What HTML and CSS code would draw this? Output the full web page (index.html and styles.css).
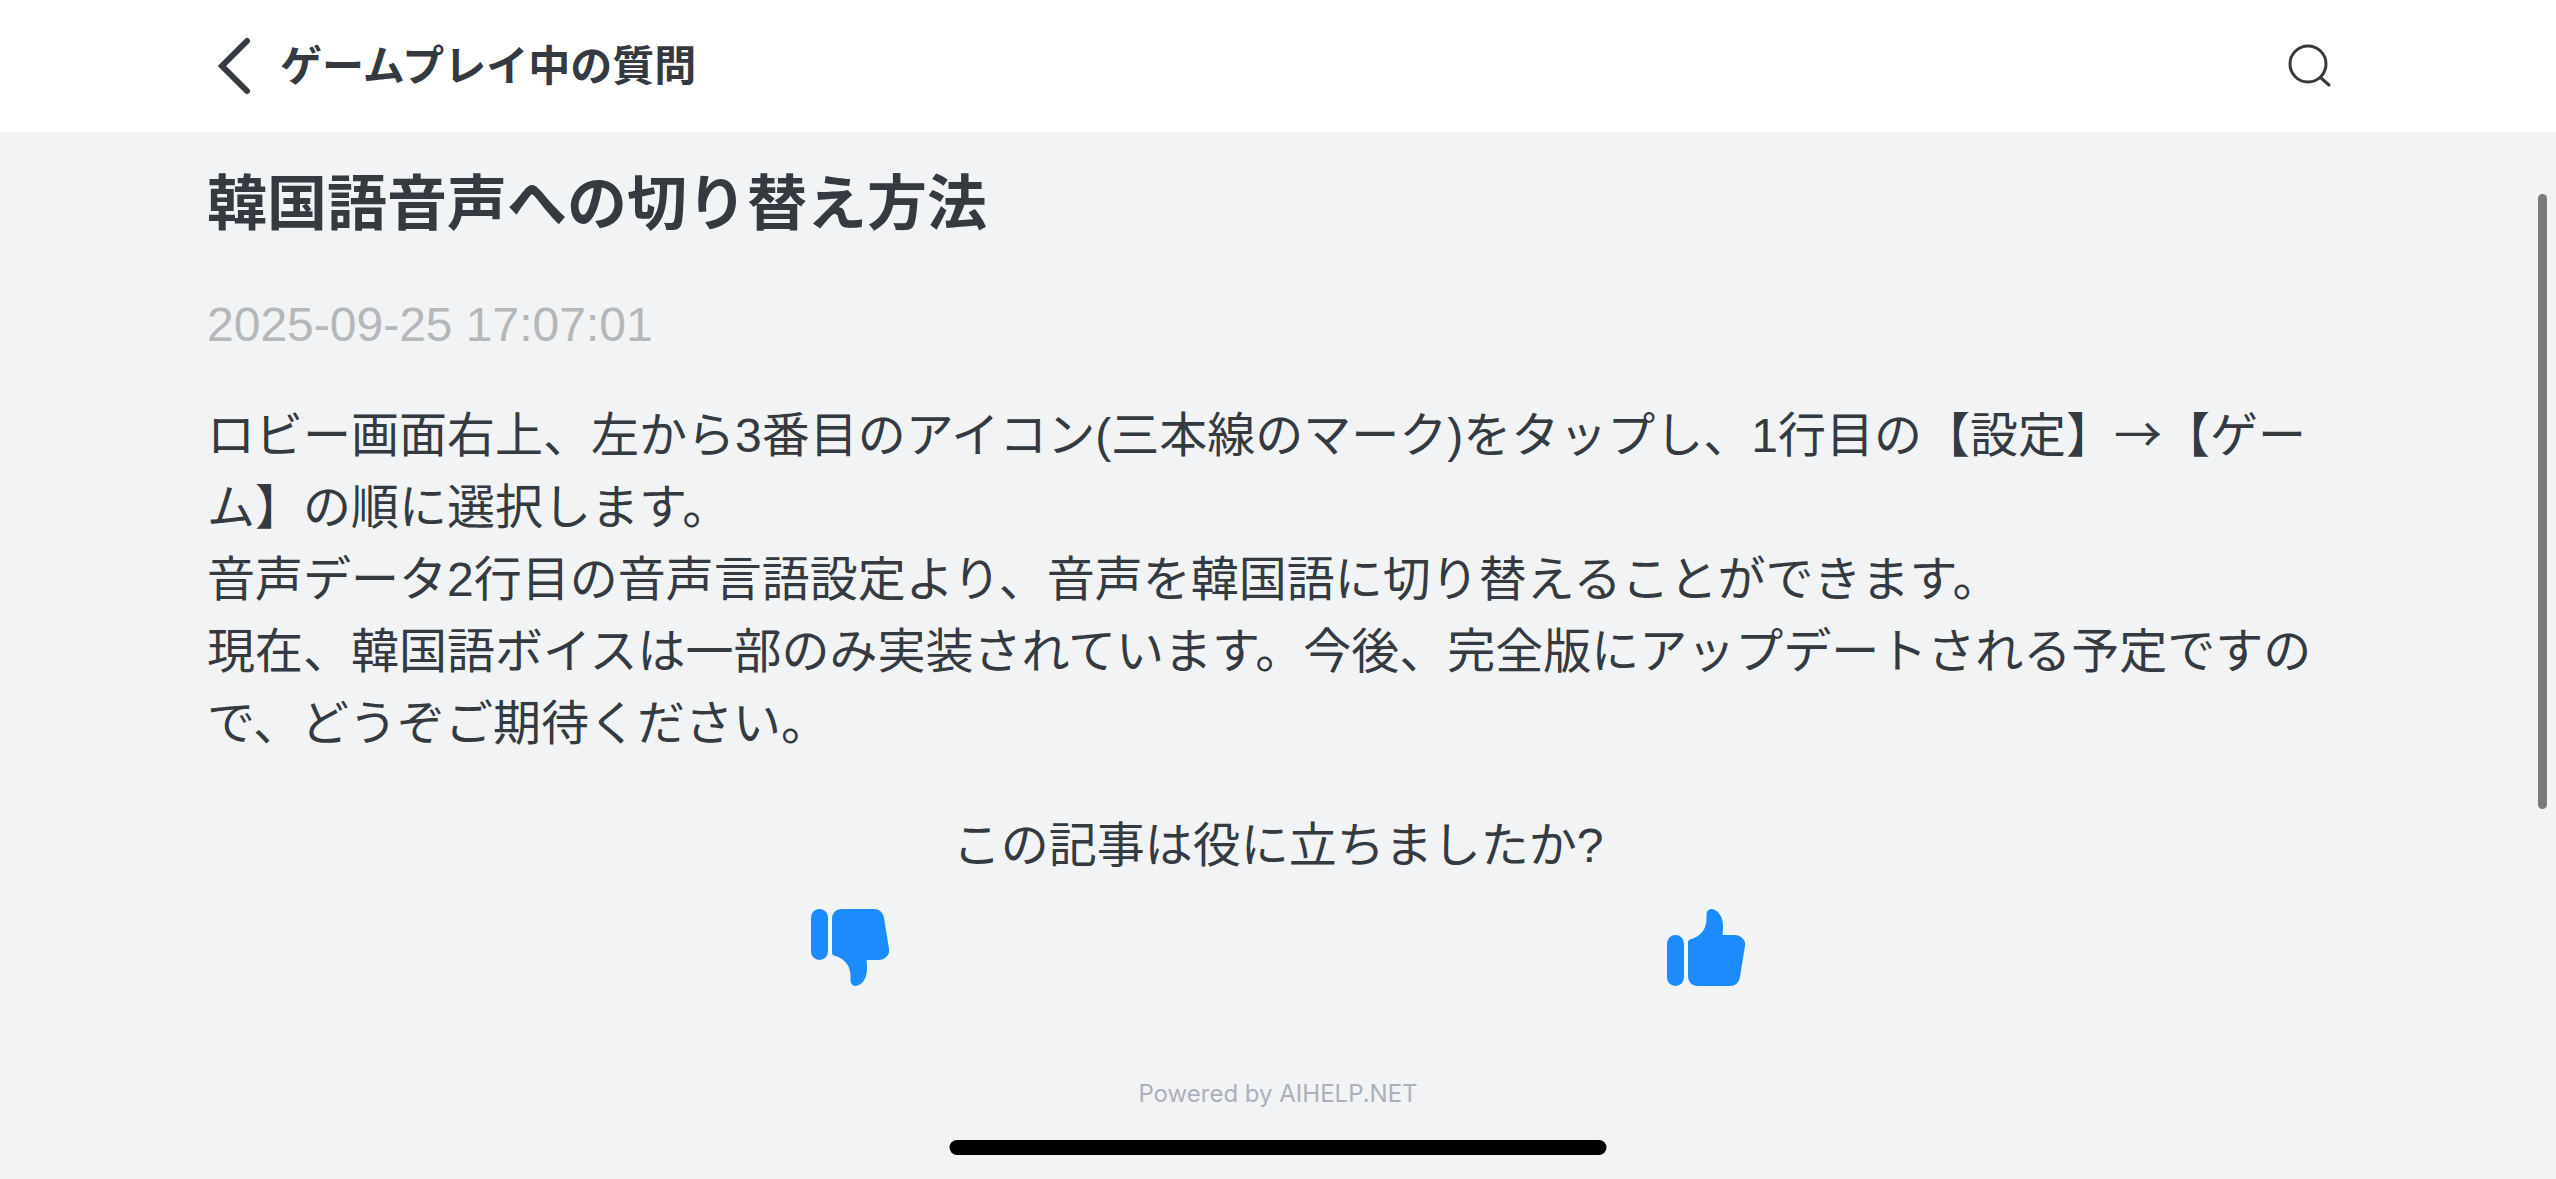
FILE: index.html
```html
<!DOCTYPE html>
<html lang="ja">
<head>
	<meta charset="utf-8">
	<meta name="viewport" content="width=device-width, initial-scale=1">
	<title>ゲームプレイ中の質問</title>
	<link rel="stylesheet" href="styles.css">
</head>
<body>
	<header class="header">
		<button class="back-button" type="button" aria-label="戻る">
			<svg width="36" height="60" viewBox="0 0 36 60" fill="none" stroke="currentColor" stroke-width="6" stroke-linecap="round" stroke-linejoin="miter">
				<path d="M31 5L6 30L31 55"/>
			</svg>
		</button>
		<h1 class="header-title">ゲームプレイ中の質問</h1>
		<button class="search-button" type="button" aria-label="検索">
			<svg width="48" height="48" viewBox="0 0 48 48" fill="none" stroke="currentColor" stroke-width="3" stroke-linecap="round">
				<circle cx="22" cy="22" r="18"/>
				<path d="M35 36L43 43"/>
			</svg>
		</button>
	</header>

	<main class="article">
		<h2 class="article-title">韓国語音声への切り替え方法</h2>
		<time class="article-date" datetime="2025-09-25T17:07:01">2025-09-25 17:07:01</time>
		<div class="article-text">
			<p>ロビー画面右上、左から3番目のアイコン(三本線のマーク)をタップし、1行目の【設定】<span class="arrow">→</span>【ゲーム】の順に選択します。</p>
			<p>音声データ2行目の音声言語設定より、音声を韓国語に切り替えることができます。</p>
			<p>現在、韓国語ボイスは一部のみ実装されています。今後、完全版にアップデートされる予定ですので、どうぞご期待ください。</p>
		</div>

		<section class="feedback">
			<p class="feedback-question">この記事は役に立ちましたか?</p>
			<div class="feedback-buttons">
				<button class="vote-button" type="button" aria-label="いいえ">
					<svg width="78" height="77" viewBox="0 0 78 77" fill="currentColor">
						<g transform="matrix(1 0 0 -1 0 77)">
							<rect x="0" y="26" width="17" height="51" rx="8.5"/>
							<path d="M21 33Q21 31 23 30.500C33 28 39 21 39.500 11V6C39.500 2 42 0 45 0C52 1 56 9 56 17Q56 22 55.500 26H67C74 26 79 31 78 37L73 68C72 74 68 77 63 77H31C25 77 21 73 21 67Z"/>
						</g>
					</svg>
				</button>
				<button class="vote-button" type="button" aria-label="はい">
					<svg width="78" height="77" viewBox="0 0 78 77" fill="currentColor">
						<rect x="0" y="26" width="17" height="51" rx="8.5"/>
						<path d="M21 33Q21 31 23 30.500C33 28 39 21 39.500 11V6C39.500 2 42 0 45 0C52 1 56 9 56 17Q56 22 55.500 26H67C74 26 79 31 78 37L73 68C72 74 68 77 63 77H31C25 77 21 73 21 67Z"/>
					</svg>
				</button>
			</div>
		</section>
	</main>

	<footer class="footer">Powered by AIHELP.NET</footer>

	<div class="scroll-thumb"></div>
	<div class="home-indicator"></div>
</body>
</html>
```

FILE: styles.css
```css
* {
	box-sizing: border-box;
}

body {
	margin: 0;
	min-height: 100vh;
	background-color: #f1f3f5;
	color: #343a40;
	font-family: "Liberation Sans", "Noto Sans CJK JP", sans-serif;
	font-size: 48px;
	line-height: 72px;
}

h1, h2, p {
	margin: 0;
}

button {
	display: flex;
	padding: 0;
	border: none;
	background: none;
	color: inherit;
	cursor: pointer;
}

.header {
	display: flex;
	align-items: center;
	height: 132px;
	padding: 0 222px 0 216px;
	background-color: #fff;
}

.header-title {
	flex: 1;
	margin-left: 28px;
	padding-top: 2px;
	font-size: 42px;
	font-weight: 700;
}

.article {
	padding: 28px 207px 0;
}

.article-title {
	font-size: 60px;
	line-height: 90px;
	font-weight: 700;
}

.article-date {
	display: block;
	margin: 39px 0;
	color: #b5b7b9;
}

.arrow {
	font-family: "Noto Sans CJK JP", sans-serif;
	line-height: 1;
}

.feedback {
	margin-top: 50px;
}

.feedback-question {
	text-align: center;
}

.feedback-buttons {
	display: flex;
	justify-content: space-around;
	margin-top: 27px;
	padding: 0 10%;
}

.vote-button {
	color: #1c8bfd;
}

.footer {
	margin-top: 90px;
	color: #adb0bb;
	font-family: Inter, "Noto Sans CJK JP", sans-serif;
	font-size: 24px;
	line-height: 36px;
	text-align: center;
}

.scroll-thumb {
	position: fixed;
	top: 194px;
	right: 9px;
	width: 9px;
	height: 615px;
	border-radius: 5px;
	background-color: #787a7c;
}

.home-indicator {
	position: fixed;
	bottom: 24px;
	left: 50%;
	width: 657px;
	height: 15px;
	border-radius: 8px;
	background-color: #000;
	transform: translateX(-50%);
}
```
